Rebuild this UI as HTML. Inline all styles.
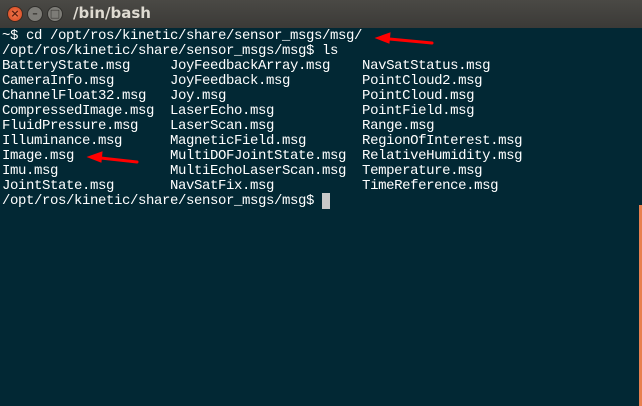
<!DOCTYPE html><html><head><style>
body{margin:0;width:642px;height:406px;overflow:hidden;background:#022834;position:relative}
.t{position:absolute;top:0;left:0;width:642px;height:28px;background:linear-gradient(#4a4945,#3b3a37);}
.t span{position:absolute;left:73px;top:4px;font:bold 15px "DejaVu Sans","Liberation Sans",sans-serif;color:#dfdbd2}
.b{position:absolute;top:6px;width:16px;height:16px;border-radius:50%;box-sizing:border-box;color:#3a3935;font:bold 11px/14px "DejaVu Sans",sans-serif;text-align:center}
pre{position:absolute;left:2px;top:29px;margin:0;font:14px/15px "Liberation Mono",monospace;letter-spacing:-0.4px;color:#fff}
</style></head><body>
<div class="t">
<div class="b" style="left:7px;background:radial-gradient(#f47a4f,#d3461e);border:1px solid #3a2a22;color:#5a2010">×</div>
<div class="b" style="left:27px;background:#7d7c77;border:1px solid #2f2e2b">–</div>
<div class="b" style="left:47px;background:#7d7c77;border:1px solid #2f2e2b">□</div>
<span>/bin/bash</span></div>
<pre>~$ cd /opt/ros/kinetic/share/sensor_msgs/msg/
/opt/ros/kinetic/share/sensor_msgs/msg$ ls
BatteryState.msg     JoyFeedbackArray.msg    NavSatStatus.msg
CameraInfo.msg       JoyFeedback.msg         PointCloud2.msg
ChannelFloat32.msg   Joy.msg                 PointCloud.msg
CompressedImage.msg  LaserEcho.msg           PointField.msg
FluidPressure.msg    LaserScan.msg           Range.msg
Illuminance.msg      MagneticField.msg       RegionOfInterest.msg
Image.msg            MultiDOFJointState.msg  RelativeHumidity.msg
Imu.msg              MultiEchoLaserScan.msg  Temperature.msg
JointState.msg       NavSatFix.msg           TimeReference.msg
/opt/ros/kinetic/share/sensor_msgs/msg$ <span style="background:#c8c8c8">&nbsp;</span></pre>
<div style="position:absolute;left:639px;top:205px;width:3px;height:201px;background:#e8804f"></div>
<svg width="642" height="406" style="position:absolute;left:0;top:0">
<g fill="#f00" stroke="#f00" stroke-width="3" stroke-linecap="round">
<line x1="432" y1="43" x2="384" y2="38.5"/><polygon points="376,38 390,33 389,43" stroke-width="1"/>
<line x1="137" y1="162" x2="96" y2="157.5"/><polygon points="88,157 102,152 101,162" stroke-width="1"/>
</g></svg>
</body></html>
